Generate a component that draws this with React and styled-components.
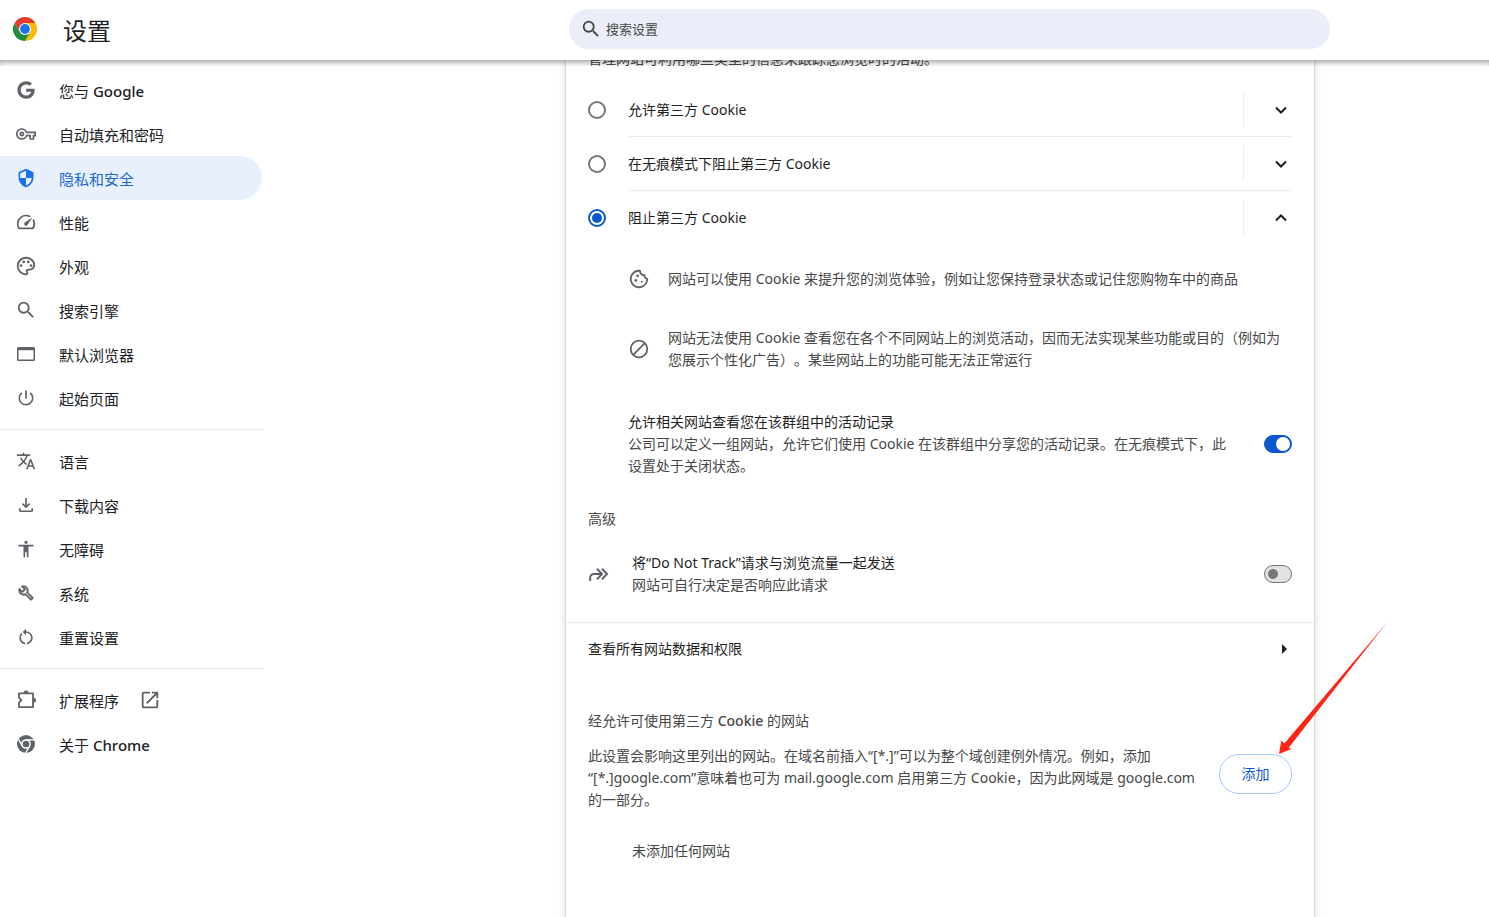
import React, { useState } from "react";
import styled, { createGlobalStyle } from "styled-components";
import { FaGoogle } from "react-icons/fa";
import {
  MdOutlineVpnKey,
  MdSecurity,
  MdOutlineSpeed,
  MdOutlinePalette,
  MdSearch,
  MdPowerSettingsNew,
  MdTranslate,
  MdAccessibility,
  MdRestartAlt,
  MdOpenInNew,
  MdOutlineCookie,
} from "react-icons/md";

const GlobalStyle = createGlobalStyle`
  * { box-sizing: border-box; }
  body {
    margin: 0;
    background: #fff;
    color: #1f1f1f;
    font-family: "Noto Sans", "Noto Sans CJK SC", sans-serif;
    font-size: 14px;
    line-height: 22px;
    text-spacing-trim: space-all;
  }
  p, h1, h2, ul { margin: 0; padding: 0; }
  button, input { font: inherit; }
`;

const Shell = styled.div`
  display: flex;
  flex-direction: column;
  height: 100vh;
  overflow: hidden;
`;

const Header = styled.header`
  position: relative;
  z-index: 2;
  flex: none;
  display: grid;
  grid-template-columns: minmax(266px, 569fr) minmax(0, 761fr) 159fr;
  height: 60px;
  background: #fff;

  &::after {
    content: "";
    position: absolute;
    top: 100%;
    left: 0;
    right: 0;
    height: 6px;
    box-shadow: inset 0 5px 6px -3px rgba(0, 0, 0, 0.4);
    pointer-events: none;
  }
`;

const Brand = styled.div`
  display: flex;
  align-items: center;
  gap: 26px;
  padding: 0 0 2px 13px;
`;

const Title = styled.h1`
  font-size: 24px;
  line-height: 32px;
  font-weight: 400;
  padding-top: 4px;
`;

const SearchBox = styled.label`
  display: flex;
  align-items: center;
  gap: 4px;
  height: 40px;
  margin-top: 9px;
  padding: 0 11px;
  border-radius: 20px;
  background: #ebeef8;
  color: #444746;
`;

const SearchInput = styled.input`
  flex: 1;
  min-width: 0;
  border: 0;
  padding: 0;
  outline: none;
  background: transparent;
  font-size: 13px;
  color: #1f1f1f;

  &::placeholder {
    color: #444746;
    opacity: 1;
  }
`;

const Body = styled.div`
  flex: 1;
  min-height: 0;
  display: grid;
  grid-template-columns: minmax(266px, 566fr) minmax(0, 748fr) 175fr;
`;

const Sidebar = styled.nav`
  width: 264px;
  padding-top: 8px;
`;

const NavGroup = styled.ul`
  list-style: none;

  & + & {
    margin-top: 9px;
    padding-top: 9px;
    border-top: 1px solid #e8eaed;
  }
`;

const NavLink = styled.a`
  display: flex;
  align-items: center;
  height: 44px;
  margin-right: 2px;
  padding-left: 15px;
  border-radius: 0 22px 22px 0;
  background: ${(p) => (p.$active ? "#e8f0fe" : "transparent")};
  color: ${(p) => (p.$active ? "#1967d2" : "#202124")};
  font-size: 15px;
  text-decoration: none;
`;

const NavIcon = styled.span`
  flex: none;
  display: flex;
  align-items: center;
  justify-content: center;
  width: 22px;
  height: 22px;
  color: ${(p) => (p.$active ? "#1a73e8" : "#5f6368")};
`;

const NavText = styled.span`
  margin: 2px 20px 0 22px;
`;

const Medium = styled.span`
  font-weight: 500;
`;

const Card = styled.main`
  background: #fff;
  box-shadow: 0 1px 2px 0 rgba(60, 64, 67, 0.3), 0 2px 6px 2px rgba(60, 64, 67, 0.15);
`;

const Intro = styled.p`
  margin: -12px 22px 13px;
  color: #474747;
`;

const Options = styled.div`
  padding: 0 22px;
`;

const OptionRow = styled.div`
  display: flex;
  align-items: center;
  gap: 22px;
`;

const OptionBody = styled.div`
  flex: 1;
  display: flex;
  align-items: center;
  justify-content: space-between;
  height: ${(p) => (p.$last ? "53px" : "54px")};
  border-bottom: ${(p) => (p.$last ? "0" : "1px solid #ececec")};
`;

const Radio = styled.input`
  appearance: none;
  flex: none;
  display: grid;
  place-items: center;
  width: 18px;
  height: 18px;
  margin: 0;
  border: 2px solid #747775;
  border-radius: 50%;

  &:checked {
    border-color: #0b57d0;
  }
  &:checked::after {
    content: "";
    width: 10px;
    height: 10px;
    border-radius: 50%;
    background: #0b57d0;
  }
`;

const ExpandCell = styled.div`
  display: flex;
  align-items: center;
  justify-content: flex-end;
  width: 49px;
  height: 35px;
  border-left: 1px solid #ececec;
`;

const IconButton = styled.button`
  display: flex;
  padding: 0;
  border: 0;
  background: transparent;
  color: #1f1f1f;
`;

const Details = styled.div`
  display: flex;
  flex-direction: column;
  gap: 37px;
  padding: 24px 22px 0 62px;
`;

const Detail = styled.div`
  display: flex;
  align-items: center;
  gap: 18px;
  color: #474747;

  & > svg {
    flex: none;
    color: #5f6368;
  }
`;

const SettingRow = styled.label`
  display: flex;
  align-items: center;
  justify-content: space-between;
  gap: 22px;
  padding: ${(p) => p.$pad};
`;

const SettingText = styled.span`
  flex: 1;
`;

const Primary = styled.span`
  display: block;
  color: #1f1f1f;
`;

const Secondary = styled.span`
  display: block;
  color: #474747;
`;

const Toggle = styled.input`
  appearance: none;
  flex: none;
  display: flex;
  align-items: center;
  width: 28px;
  height: 18px;
  margin: 0;
  padding: 0 3px;
  border: 1px solid #747775;
  border-radius: 9px;
  background: #e1e3e1;

  &::after {
    content: "";
    width: 10px;
    height: 10px;
    border-radius: 50%;
    background: #747775;
  }
  &:checked {
    justify-content: flex-end;
    padding: 0 1px;
    border-color: #0b57d0;
    background: #0b57d0;
  }
  &:checked::after {
    width: 14px;
    height: 14px;
    background: #fff;
  }
`;

const SectionTitle = styled.h2`
  padding: ${(p) => p.$pad};
  font-size: 14px;
  font-weight: 400;
  color: #474747;
`;

const LinkRow = styled.a`
  display: flex;
  align-items: center;
  justify-content: space-between;
  height: 53px;
  padding: 0 27px 0 22px;
  border-top: 1px solid #ececec;
  color: #1f1f1f;
  text-decoration: none;
`;

const SiteRow = styled.div`
  display: flex;
  align-items: flex-start;
  justify-content: space-between;
  padding: 13px 22px 0;
  color: #474747;
`;

const AddWrap = styled.div`
  position: relative;
  flex: none;
  margin-top: 9px;
`;

const AddButton = styled.button`
  width: 73px;
  height: 40px;
  padding: 0;
  border: 1px solid #a8c7fa;
  border-radius: 20px;
  background: #fff;
  color: #0b57d0;
`;

const Pointer = styled.svg`
  position: absolute;
  left: 56px;
  top: -134px;
  pointer-events: none;
`;

const Empty = styled.p`
  padding: 29px 22px 0 66px;
  color: #474747;
`;

function ChromeLogo() {
  return (
    <svg width="24" height="24" viewBox="0 0 48 48" aria-hidden="true">
      <path fill="#fbbc04" d="M24 12h20.800A24 24 0 0 1 24 48l10.400-18Z" />
      <path fill="#1e8e3e" d="M13.600 30 3.200 12A24 24 0 0 0 24 48l10.400-18Z" />
      <path fill="#e33b2e" d="M3.200 12A24 24 0 0 1 44.800 12H24L13.600 30Z" />
      <circle cx="24" cy="24" r="12" fill="#fff" />
      <circle cx="24" cy="24" r="9.800" fill="#1a73e8" />
    </svg>
  );
}

function ChromeMono() {
  return (
    <svg width="20" height="20" viewBox="0 0 24 24" aria-hidden="true">
      <circle cx="12" cy="12" r="10.800" fill="currentColor" />
      <circle cx="12" cy="12" r="5.800" fill="#fff" />
      <g stroke="#fff" strokeWidth="1.600">
        <path d="M12 7h11" />
        <path d="M7.700 14.500 2.200 5" />
        <path d="M16.300 14.500 10.800 24" />
      </g>
      <circle cx="12" cy="12" r="4" fill="currentColor" />
    </svg>
  );
}

function WindowIcon() {
  return (
    <svg width="20" height="20" viewBox="0 0 20 20" aria-hidden="true">
      <path
        fill="currentColor"
        fillRule="evenodd"
        d="M2.500 3h15A1.500 1.500 0 0 1 19 4.500v11a1.500 1.500 0 0 1-1.500 1.500h-15A1.500 1.500 0 0 1 1 15.500v-11A1.500 1.500 0 0 1 2.500 3Zm0 3.200v9.300h15V6.200Z"
      />
    </svg>
  );
}

function WrenchIcon() {
  return (
    <svg width="20" height="20" viewBox="0 -960 960 960" fill="currentColor" stroke="currentColor" strokeWidth="12" aria-hidden="true">
      <path d="M686-132 444-376q-20 8-40.500 12t-43.500 4q-100 0-170-70t-70-170q0-36 10-68.500t28-61.500l146 146 72-72-146-146q29-18 61.500-28t68.500-10q100 0 170 70t70 170q0 23-4 43.500T584-516l244 242q12 12 12 29t-12 29l-84 84q-12 12-29 12t-29-12Zm29-85 27-27-256-256q18-20 26-46.500t8-53.500q0-60-38.500-104.500T386-758l74 74q12 12 12 28t-12 28L332-500q-12 12-28 12t-28-12l-74-74q9 57 53.500 95.500T360-440q26 0 52-8t47-25l256 256Z" />
    </svg>
  );
}

function DownloadIcon() {
  return (
    <svg width="20" height="20" viewBox="0 -960 960 960" fill="currentColor" aria-hidden="true">
      <path d="M480-320 280-520l56-58 104 104v-346h80v346l104-104 56 58-200 200ZM220-140q-33 0-56.500-23.500T140-220v-110h80v110h520v-110h80v110q0 33-23.500 56.500T740-140H220Z" />
    </svg>
  );
}

function ExtensionIcon() {
  return (
    <svg width="20" height="20" viewBox="0 0 20 20" fill="none" aria-hidden="true">
      <path d="M2.900 3.400H17v13.700H2.900v-4.300L5.400 10.200 2.900 7.600z" stroke="currentColor" strokeWidth="1.800" strokeLinejoin="round" />
      <path d="M7.500 3a2.500 2.500 0 0 1 5 0zM17.500 7.700a2.500 2.500 0 0 1 0 5z" fill="currentColor" />
    </svg>
  );
}

function Chevron({ up }) {
  return (
    <svg width="22" height="22" viewBox="0 0 22 22" fill="none" stroke="currentColor" strokeWidth="2" aria-hidden="true">
      <path d={up ? "m6 13.500 5-5 5 5" : "m6 8.500 5 5 5-5"} />
    </svg>
  );
}

function BlockedIcon() {
  return (
    <svg width="22" height="22" viewBox="0 0 22 22" fill="none" stroke="currentColor" strokeWidth="1.800" aria-hidden="true">
      <circle cx="11" cy="11" r="8.300" />
      <path d="M5.200 16.800 16.800 5.200" />
    </svg>
  );
}

function ForwardIcon() {
  return (
    <svg width="22" height="22" viewBox="0 0 22 22" fill="none" stroke="currentColor" strokeWidth="2" aria-hidden="true">
      <path d="M2.200 18v-3.500a3.500 3.500 0 0 1 3.500-3.500H13" />
      <path d="m9 5.800 5 5.200-5 5.200" />
      <path d="m14 5.800 5 5.200-5 5.200" />
    </svg>
  );
}

const groups = [
  [
    { icon: <FaGoogle size={18} />, text: "您与", latin: "Google" },
    { icon: <MdOutlineVpnKey size={20} />, text: "自动填充和密码" },
    { icon: <MdSecurity size={20} />, text: "隐私和安全", active: true },
    { icon: <MdOutlineSpeed size={22} />, text: "性能" },
    { icon: <MdOutlinePalette size={22} />, text: "外观" },
    { icon: <MdSearch size={22} />, text: "搜索引擎" },
    { icon: <WindowIcon />, text: "默认浏览器" },
    { icon: <MdPowerSettingsNew size={20} />, text: "起始页面" },
  ],
  [
    { icon: <MdTranslate size={20} />, text: "语言" },
    { icon: <DownloadIcon />, text: "下载内容" },
    { icon: <MdAccessibility size={20} />, text: "无障碍" },
    { icon: <WrenchIcon />, text: "系统" },
    { icon: <MdRestartAlt size={20} />, text: "重置设置" },
  ],
  [
    { icon: <ExtensionIcon />, text: "扩展程序", external: true },
    { icon: <ChromeMono />, text: "关于", latin: "Chrome" },
  ],
];

const options = ["允许第三方 Cookie", "在无痕模式下阻止第三方 Cookie", "阻止第三方 Cookie"];

export default function App() {
  const [selected, setSelected] = useState(2);

  return (
    <>
      <GlobalStyle />
      <Shell>
        <Header>
          <Brand>
            <ChromeLogo />
            <Title>设置</Title>
          </Brand>
          <SearchBox>
            <MdSearch size={22} />
            <SearchInput type="search" placeholder="搜索设置" aria-label="搜索设置" />
          </SearchBox>
        </Header>
        <Body>
          <Sidebar>
            {groups.map((items, g) => (
              <NavGroup key={g}>
                {items.map((item) => (
                  <li key={item.text}>
                    <NavLink href="#" $active={item.active}>
                      <NavIcon $active={item.active}>{item.icon}</NavIcon>
                      <NavText>
                        {item.text}
                        {item.latin && <Medium> {item.latin}</Medium>}
                      </NavText>
                      {item.external && (
                        <NavIcon>
                          <MdOpenInNew size={22} />
                        </NavIcon>
                      )}
                    </NavLink>
                  </li>
                ))}
              </NavGroup>
            ))}
          </Sidebar>
          <Card>
            <Intro>管理网站可利用哪些类型的信息来跟踪您浏览时的活动。</Intro>
            <Options>
              {options.map((text, i) => {
                const last = i === options.length - 1;
                return (
                  <OptionRow key={text}>
                    <Radio
                      type="radio"
                      name="cookies"
                      id={`cookies-${i}`}
                      checked={selected === i}
                      onChange={() => setSelected(i)}
                    />
                    <OptionBody $last={last}>
                      <label htmlFor={`cookies-${i}`}>{text}</label>
                      <ExpandCell>
                        <IconButton type="button" aria-label={text}>
                          <Chevron up={last} />
                        </IconButton>
                      </ExpandCell>
                    </OptionBody>
                  </OptionRow>
                );
              })}
            </Options>
            <Details>
              <Detail>
                <MdOutlineCookie size={22} />
                <p>网站可以使用 Cookie 来提升您的浏览体验，例如让您保持登录状态或记住您购物车中的商品</p>
              </Detail>
              <Detail>
                <BlockedIcon />
                <p>
                  网站无法使用 Cookie 查看您在各个不同网站上的浏览活动，因而无法实现某些功能或目的（例如为
                  <br />
                  您展示个性化广告）。某些网站上的功能可能无法正常运行
                </p>
              </Detail>
            </Details>
            <SettingRow $pad="40px 22px 0 62px">
              <SettingText>
                <Primary>允许相关网站查看您在该群组中的活动记录</Primary>
                <Secondary>
                  公司可以定义一组网站，允许它们使用 Cookie 在该群组中分享您的活动记录。在无痕模式下，此
                  <br />
                  设置处于关闭状态。
                </Secondary>
              </SettingText>
              <Toggle type="checkbox" role="switch" defaultChecked />
            </SettingRow>
            <SectionTitle $pad="31px 22px 0">高级</SectionTitle>
            <SettingRow $pad="22px 22px 26px">
              <Detail as="span">
                <ForwardIcon />
              </Detail>
              <SettingText>
                <Primary>将“Do Not Track”请求与浏览流量一起发送</Primary>
                <Secondary>网站可自行决定是否响应此请求</Secondary>
              </SettingText>
              <Toggle type="checkbox" role="switch" />
            </SettingRow>
            <LinkRow href="#">
              查看所有网站数据和权限
              <svg width="5" height="10" viewBox="0 0 5 10" aria-hidden="true">
                <path d="M0 0l5 5-5 5z" fill="#1f1f1f" />
              </svg>
            </LinkRow>
            <SectionTitle $pad="35px 22px 0">
              经允许可使用第三方 <Medium>Cookie</Medium> 的网站
            </SectionTitle>
            <SiteRow>
              <p>
                此设置会影响这里列出的网站。在域名前插入“[*.]”可以为整个域创建例外情况。例如，添加
                <br />
                “[*.]google.com”意味着也可为 mail.google.com 启用第三方 Cookie，因为此网域是 google.com
                <br />
                的一部分。
              </p>
              <AddWrap>
                <AddButton type="button">添加</AddButton>
                <Pointer width="116" height="138" viewBox="0 0 116 138" aria-hidden="true">
                  <path d="M4 134 6.300 120.300 9.300 123.600 112 2.500 13.500 128 17 128.800Z" fill="#ff2416" />
                </Pointer>
              </AddWrap>
            </SiteRow>
            <Empty>未添加任何网站</Empty>
          </Card>
        </Body>
      </Shell>
    </>
  );
}
